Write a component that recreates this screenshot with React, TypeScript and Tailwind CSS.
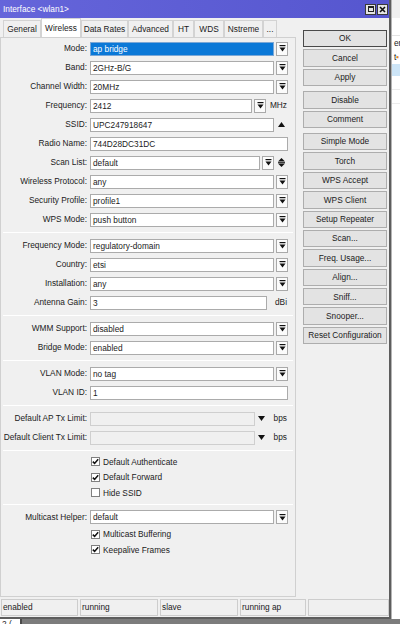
import React from 'react';

const tabs = [
  { name: 'General', w: 'w-[38px]' },
  { name: 'Wireless', w: 'w-[40px]', active: true },
  { name: 'Data Rates', w: 'w-[47px]' },
  { name: 'Advanced', w: 'w-[45px]' },
  { name: 'HT', w: 'w-[21px]' },
  { name: 'WDS', w: 'w-[30px]' },
  { name: 'Nstreme', w: 'w-[39px]' },
  { name: '...', w: 'w-[14px]' },
];

const buttonGroups = [
  ['OK', 'Cancel', 'Apply'],
  ['Disable', 'Comment'],
  [
    'Simple Mode',
    'Torch',
    'WPS Accept',
    'WPS Client',
    'Setup Repeater',
    'Scan...',
    'Freq. Usage...',
    'Align...',
    'Sniff...',
    'Snooper...',
    'Reset Configuration',
  ],
];

const statusCells = [
  { text: 'enabled', w: 'w-[77px]' },
  { text: 'running', w: 'w-[78px]' },
  { text: 'slave', w: 'w-[78px]' },
  { text: 'running ap', w: 'w-[66px]' },
  { text: '', w: 'w-[81px]' },
];

function DropIcon() {
  return (
    <svg width="7" height="7" viewBox="0 0 7 7">
      <rect x="0.5" y="0" width="6" height="1.2" fill="#111" />
      <path d="M0.5 2.4h6L3.5 6.4z" fill="#111" />
    </svg>
  );
}

function DropBtn() {
  return (
    <div className="ml-[2px] flex h-[14px] w-[12px] shrink-0 items-center justify-center border border-[#a9a9a9] bg-[#fbfbfb]">
      <DropIcon />
    </div>
  );
}

function Box({ value, w, selected, disabled }: { value?: string; w: string; selected?: boolean; disabled?: boolean }) {
  const tone = selected
    ? 'border-[#7aa7d6] bg-[#0a78d7] text-white'
    : disabled
      ? 'border-[#cfcfcf] bg-[#f0f0f0]'
      : 'border-[#ababab] bg-white';
  return (
    <div className={`h-[14px] shrink-0 overflow-hidden whitespace-nowrap border pl-[2px] leading-[12px] ${w} ${tone}`}>
      {value}
    </div>
  );
}

function Row({ label, children }: { label: string; children: React.ReactNode }) {
  return (
    <div className="flex h-[19px] items-center">
      <div className="w-[86px] shrink-0 whitespace-nowrap text-right">{label}</div>
      <div className="ml-[3px] flex w-[198px] items-center">{children}</div>
    </div>
  );
}

function SelectRow({ label, value, selected }: { label: string; value: string; selected?: boolean }) {
  return (
    <Row label={label}>
      <Box value={value} w="w-[184px]" selected={selected} />
      <DropBtn />
    </Row>
  );
}

function Sep() {
  return <div className="mx-[2px] my-[3px] h-px border-b border-white bg-[#dadada]" />;
}

function Check({ label, checked }: { label: string; checked?: boolean }) {
  return (
    <div className="flex h-[15.5px] items-center pl-[90px]">
      <div className="flex h-[9px] w-[9px] items-center justify-center border border-[#808080] bg-white">
        {checked && (
          <svg width="7" height="7" viewBox="0 0 7 7">
            <path d="M0.8 3.6l1.8 1.8L6.2 1.2" stroke="#111" strokeWidth="1.5" fill="none" />
          </svg>
        )}
      </div>
      <span className="ml-[3px] whitespace-nowrap">{label}</span>
    </div>
  );
}

function TxRow({ label }: { label: string }) {
  return (
    <Row label={label}>
      <Box w="w-[165px]" disabled />
      <svg className="ml-[3px]" width="7" height="5" viewBox="0 0 7 5">
        <path d="M0 0h7L3.5 5z" fill="#111" />
      </svg>
      <span className="ml-auto pr-[1px]">bps</span>
    </Row>
  );
}

export default function App() {
  return (
    <div className="flex h-[624px] w-[400px] flex-col overflow-hidden bg-[#7c7c7c] font-[Liberation_Sans,Arial,sans-serif] text-[8.3px] text-[#1b1b1b]">
      <div className="flex h-[619px]">
        {/* window */}
        <div className="flex w-[391px] flex-col border-b-2 border-r-2 border-[#5d5d5d] bg-[#f0f0f0]">
          <div className="flex h-[18px] items-center bg-gradient-to-r from-[#6565da] to-[#5656cf] pl-[3px] pr-[1px] text-white">
            <span>Interface &lt;wlan1&gt;</span>
            <div className="ml-auto flex gap-[1px]">
              <div className="flex h-[11px] w-[11px] items-center justify-center border border-[#3a3a3a] bg-[#e4e4e4]">
                <div className="h-[6px] w-[6px] border border-[#222] border-t-2" />
              </div>
              <div className="flex h-[11px] w-[11px] items-center justify-center border border-[#3a3a3a] bg-[#e4e4e4]">
                <svg width="7" height="7" viewBox="0 0 7 7">
                  <path d="M1 1l5 5M6 1L1 6" stroke="#111" strokeWidth="1.6" />
                </svg>
              </div>
            </div>
          </div>

          <div className="flex h-[580px]">
            <div className="flex w-[296px] flex-col">
              <div className="flex h-[19px] items-end pl-[3px]">
                {tabs.map((t) => (
                  <div
                    key={t.name}
                    className={`flex items-center justify-center whitespace-nowrap border border-b-0 border-[#d3d3d3] ${t.w} ${
                      t.active ? 'h-[19px] bg-white' : 'h-[17px] bg-[#f0f0f0]'
                    }`}
                  >
                    {t.name}
                  </div>
                ))}
              </div>

              <div className="h-[560px] border border-[#d0d0d0] pt-[1px]">
                <SelectRow label="Mode:" value="ap bridge" selected />
                <SelectRow label="Band:" value="2GHz-B/G" />
                <SelectRow label="Channel Width:" value="20MHz" />
                <Row label="Frequency:">
                  <Box value="2412" w="w-[162px]" />
                  <DropBtn />
                  <span className="ml-auto pr-[1px]">MHz</span>
                </Row>
                <Row label="SSID:">
                  <Box value="UPC247918647" w="w-[184px]" />
                  <div className="flex flex-1 justify-center">
                    <svg width="7" height="5" viewBox="0 0 7 5">
                      <path d="M0 5h7L3.5 0z" fill="#111" />
                    </svg>
                  </div>
                </Row>
                <Row label="Radio Name:">
                  <Box value="744D28DC31DC" w="w-[198px]" />
                </Row>
                <Row label="Scan List:">
                  <Box value="default" w="w-[170px]" />
                  <DropBtn />
                  <div className="flex flex-1 justify-center">
                    <svg width="7" height="9" viewBox="0 0 7 9">
                      <path d="M0 3.6h7L3.5 0z" fill="#111" />
                      <rect x="0" y="4.2" width="7" height="0.9" fill="#111" />
                      <path d="M0 5.6h7L3.5 9z" fill="#111" />
                    </svg>
                  </div>
                </Row>
                <SelectRow label="Wireless Protocol:" value="any" />
                <SelectRow label="Security Profile:" value="profile1" />
                <SelectRow label="WPS Mode:" value="push button" />
                <Sep />
                <SelectRow label="Frequency Mode:" value="regulatory-domain" />
                <SelectRow label="Country:" value="etsi" />
                <SelectRow label="Installation:" value="any" />
                <Row label="Antenna Gain:">
                  <Box value="3" w="w-[177px]" />
                  <span className="ml-auto pr-[1px]">dBi</span>
                </Row>
                <Sep />
                <SelectRow label="WMM Support:" value="disabled" />
                <SelectRow label="Bridge Mode:" value="enabled" />
                <Sep />
                <SelectRow label="VLAN Mode:" value="no tag" />
                <Row label="VLAN ID:">
                  <Box value="1" w="w-[198px]" />
                </Row>
                <Sep />
                <TxRow label="Default AP Tx Limit:" />
                <TxRow label="Default Client Tx Limit:" />
                <Sep />
                <Check label="Default Authenticate" checked />
                <Check label="Default Forward" checked />
                <Check label="Hide SSID" />
                <Sep />
                <SelectRow label="Multicast Helper:" value="default" />
                <Check label="Multicast Buffering" checked />
                <Check label="Keepalive Frames" checked />
              </div>
            </div>

            <div className="flex flex-1 flex-col gap-[5px] pl-[7px] pt-[12px]">
              {buttonGroups.map((group, gi) => (
                <div key={gi} className="flex flex-col gap-[2px]">
                  {group.map((b) => (
                    <div
                      key={b}
                      className={`flex h-[17.4px] w-[84px] items-center justify-center whitespace-nowrap border bg-[#e3e3e3] ${
                        b === 'OK' ? 'border-[#4a4a4a]' : 'border-[#adadad]'
                      }`}
                    >
                      {b}
                    </div>
                  ))}
                </div>
              ))}
            </div>
          </div>

          <div className="flex h-[19px] gap-[2px] pl-[1px] pt-[1px]">
            {statusCells.map((c, i) => (
              <div
                key={i}
                className={`flex h-[17px] items-center border border-[#cdcdcd] pl-[1px] leading-none ${c.w}`}
              >
                {c.text}
              </div>
            ))}
          </div>
        </div>

        {/* window behind */}
        <div className="flex flex-1 flex-col overflow-hidden border-l border-[#b5b5b5] bg-white">
          <div className="h-[18px] bg-[#f0f0f0]" />
          <div className="h-[18px] border-b border-[#e3e3e3]" />
          <div className="h-[14px] whitespace-nowrap pl-[2px] leading-[14px]">er</div>
          <div className="h-[14px] whitespace-nowrap pl-[2px] leading-[14px]">
            t<span className="text-[#e0892a]">▪</span>
          </div>
          <div className="h-[12px] bg-[#cde5f7]" />
          <div className="h-[14px] border-b border-[#ececec]" />
          <div className="h-[14px] border-b border-[#ececec]" />
        </div>
      </div>

      <div className="flex flex-1">
        <div className="w-[22px] overflow-hidden border-r-2 border-[#4a4a4a] bg-white pl-[2px] leading-[10px]">2 (</div>
      </div>
    </div>
  );
}
